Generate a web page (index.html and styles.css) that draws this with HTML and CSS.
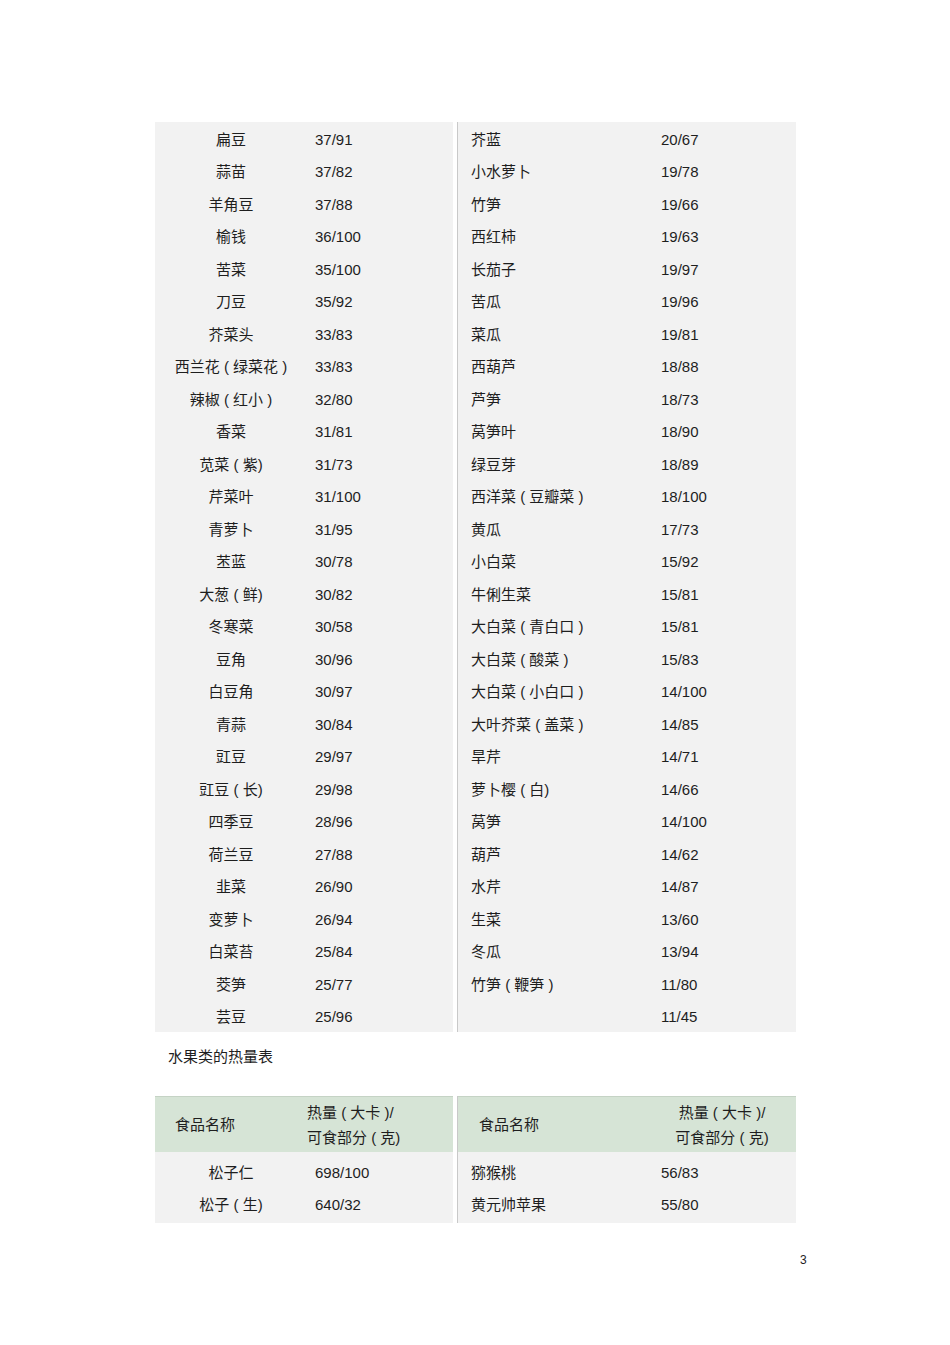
FILE: index.html
```html
<!DOCTYPE html>
<html lang="zh-CN">
<head>
<meta charset="utf-8">
<title>热量表</title>
<link rel="stylesheet" href="styles.css">
</head>
<body>
<div class="page">
  <div class="pair veg">
    <div class="tbl left">
      <div class="row"><span class="name">扁豆</span><span class="num">37/91</span></div>
      <div class="row"><span class="name">蒜苗</span><span class="num">37/82</span></div>
      <div class="row"><span class="name">羊角豆</span><span class="num">37/88</span></div>
      <div class="row"><span class="name">榆钱</span><span class="num">36/100</span></div>
      <div class="row"><span class="name">苦菜</span><span class="num">35/100</span></div>
      <div class="row"><span class="name">刀豆</span><span class="num">35/92</span></div>
      <div class="row"><span class="name">芥菜头</span><span class="num">33/83</span></div>
      <div class="row"><span class="name">西兰花 ( 绿菜花 )</span><span class="num">33/83</span></div>
      <div class="row"><span class="name">辣椒 ( 红小 )</span><span class="num">32/80</span></div>
      <div class="row"><span class="name">香菜</span><span class="num">31/81</span></div>
      <div class="row"><span class="name">苋菜 ( 紫)</span><span class="num">31/73</span></div>
      <div class="row"><span class="name">芹菜叶</span><span class="num">31/100</span></div>
      <div class="row"><span class="name">青萝卜</span><span class="num">31/95</span></div>
      <div class="row"><span class="name">苤蓝</span><span class="num">30/78</span></div>
      <div class="row"><span class="name">大葱 ( 鲜)</span><span class="num">30/82</span></div>
      <div class="row"><span class="name">冬寒菜</span><span class="num">30/58</span></div>
      <div class="row"><span class="name">豆角</span><span class="num">30/96</span></div>
      <div class="row"><span class="name">白豆角</span><span class="num">30/97</span></div>
      <div class="row"><span class="name">青蒜</span><span class="num">30/84</span></div>
      <div class="row"><span class="name">豇豆</span><span class="num">29/97</span></div>
      <div class="row"><span class="name">豇豆 ( 长)</span><span class="num">29/98</span></div>
      <div class="row"><span class="name">四季豆</span><span class="num">28/96</span></div>
      <div class="row"><span class="name">荷兰豆</span><span class="num">27/88</span></div>
      <div class="row"><span class="name">韭菜</span><span class="num">26/90</span></div>
      <div class="row"><span class="name">变萝卜</span><span class="num">26/94</span></div>
      <div class="row"><span class="name">白菜苔</span><span class="num">25/84</span></div>
      <div class="row"><span class="name">茭笋</span><span class="num">25/77</span></div>
      <div class="row"><span class="name">芸豆</span><span class="num">25/96</span></div>
    </div>
    <div class="tbl right">
      <div class="row"><span class="name">芥蓝</span><span class="num">20/67</span></div>
      <div class="row"><span class="name">小水萝卜</span><span class="num">19/78</span></div>
      <div class="row"><span class="name">竹笋</span><span class="num">19/66</span></div>
      <div class="row"><span class="name">西红柿</span><span class="num">19/63</span></div>
      <div class="row"><span class="name">长茄子</span><span class="num">19/97</span></div>
      <div class="row"><span class="name">苦瓜</span><span class="num">19/96</span></div>
      <div class="row"><span class="name">菜瓜</span><span class="num">19/81</span></div>
      <div class="row"><span class="name">西葫芦</span><span class="num">18/88</span></div>
      <div class="row"><span class="name">芦笋</span><span class="num">18/73</span></div>
      <div class="row"><span class="name">莴笋叶</span><span class="num">18/90</span></div>
      <div class="row"><span class="name">绿豆芽</span><span class="num">18/89</span></div>
      <div class="row"><span class="name">西洋菜 ( 豆瓣菜 )</span><span class="num">18/100</span></div>
      <div class="row"><span class="name">黄瓜</span><span class="num">17/73</span></div>
      <div class="row"><span class="name">小白菜</span><span class="num">15/92</span></div>
      <div class="row"><span class="name">牛俐生菜</span><span class="num">15/81</span></div>
      <div class="row"><span class="name">大白菜 ( 青白口 )</span><span class="num">15/81</span></div>
      <div class="row"><span class="name">大白菜 ( 酸菜 )</span><span class="num">15/83</span></div>
      <div class="row"><span class="name">大白菜 ( 小白口 )</span><span class="num">14/100</span></div>
      <div class="row"><span class="name">大叶芥菜 ( 盖菜 )</span><span class="num">14/85</span></div>
      <div class="row"><span class="name">旱芹</span><span class="num">14/71</span></div>
      <div class="row"><span class="name">萝卜樱 ( 白)</span><span class="num">14/66</span></div>
      <div class="row"><span class="name">莴笋</span><span class="num">14/100</span></div>
      <div class="row"><span class="name">葫芦</span><span class="num">14/62</span></div>
      <div class="row"><span class="name">水芹</span><span class="num">14/87</span></div>
      <div class="row"><span class="name">生菜</span><span class="num">13/60</span></div>
      <div class="row"><span class="name">冬瓜</span><span class="num">13/94</span></div>
      <div class="row"><span class="name">竹笋 ( 鞭笋 )</span><span class="num">11/80</span></div>
      <div class="row"><span class="name"></span><span class="num">11/45</span></div>
    </div>
  </div>

  <div class="title">水果类的热量表</div>

  <div class="pair fruit">
    <div class="tbl left">
      <div class="head">
        <span class="hname">食品名称</span>
        <span class="hval">热量 ( 大卡 )/<br>可食部分 ( 克)</span>
      </div>
      <div class="body">
        <div class="row"><span class="name">松子仁</span><span class="num">698/100</span></div>
        <div class="row"><span class="name">松子 ( 生)</span><span class="num">640/32</span></div>
      </div>
    </div>
    <div class="tbl right">
      <div class="head">
        <span class="hname">食品名称</span>
        <span class="hval">热量 ( 大卡 )/<br>可食部分 ( 克)</span>
      </div>
      <div class="body">
        <div class="row"><span class="name">猕猴桃</span><span class="num">56/83</span></div>
        <div class="row"><span class="name">黄元帅苹果</span><span class="num">55/80</span></div>
      </div>
    </div>
  </div>

  <div class="pageno">3</div>
</div>
</body>
</html>
```

FILE: styles.css
```css
* { box-sizing: border-box; }
html, body { margin: 0; padding: 0; background: #fff; }
body {
  font-family: "Liberation Sans", "Noto Sans CJK SC", sans-serif;
  font-size: 15px;
  color: #1e1e1e;
}
.page {
  width: 950px;
  height: 1345px;
  padding: 122px 0 0 155px;
}
.pair {
  display: flex;
  width: 641px;
  gap: 4px;
}
.tbl {
  background: #f2f2f2;
}
.tbl.left { width: 298px; }
.tbl.right {
  width: 339px;
  border-left: 1px solid #c9c9c9;
}
.row {
  display: grid;
  height: 32.5px;
  align-items: center;
  padding-top: 3px;
  line-height: 18px;
  white-space: nowrap;
}
.left .row { grid-template-columns: 152px 1fr; }
.left .name { text-align: center; }
.left .num { padding-left: 8px; }
.right .row { grid-template-columns: 203px 1fr; }
.right .name { padding-left: 13px; }

.title {
  padding: 16px 0 0 13px;
  height: 64px;
  line-height: 18px;
}
.head {
  display: grid;
  height: 56px;
  align-items: center;
  background: #d6e4d6;
  border-top: 1px solid #c5d3c5;
  line-height: 25px;
  padding-top: 0;
}
.left .head { grid-template-columns: 152px 1fr; }
.left .hname { padding-left: 20px; }
.right .head { grid-template-columns: 190px 1fr; }
.right .hname { padding-left: 21px; }
.right .hval { text-align: center; }
.body { padding: 3px 0 4px; }
.body .row { height: 32px; }

.pageno {
  margin: 30px 0 0 645px;
  font-size: 12px;
  line-height: 14px;
}
```
